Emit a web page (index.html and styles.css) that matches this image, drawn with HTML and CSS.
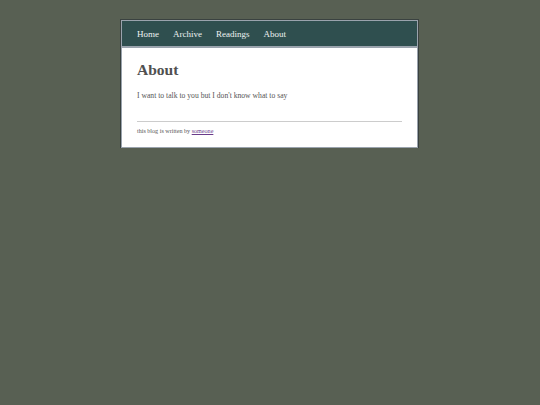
FILE: index.html
```html
<!DOCTYPE html>
<html>
<head>
<meta charset="utf-8">
<link rel="stylesheet" href="styles.css">
</head>
<body>
<div class="page">
  <nav class="nav">
    <a href="#">Home</a>
    <a href="#">Archive</a>
    <a href="#">Readings</a>
    <a href="#">About</a>
  </nav>
  <main class="content">
    <h1 class="title">About</h1>
    <p class="text">I want to talk to you but I don't know what to say</p>
    <hr class="rule">
    <footer class="foot">this blog is written by <a href="#">someone</a></footer>
  </main>
</div>
</body>
</html>
```
FILE: styles.css
```css
html, body { margin: 0; padding: 0; }
body {
  background: #586053;
  font-family: "Liberation Serif", "Times New Roman", serif;
  color: #555;
}
.page {
  width: 295px;
  margin: 20px 0 0 121px;
  border: 1px solid #9aa3ad;
  outline: 1px solid #3a4240;
  background: #fff;
}
.nav {
  background: #2f4f4f;
  display: flex;
  gap: 14px;
  padding: 8px 15px 6px;
  border-bottom: 2px solid #9aa3ad;
}
.nav a {
  color: #eef2f2;
  text-decoration: none;
  font-size: 9px;
  line-height: 11px;
}
.content {
  padding: 12px 15px 12px;
}
.title {
  margin: 0;
  font-size: 15.5px;
  line-height: 20px;
  color: #505050;
}
.text {
  margin: 11px 0 0;
  font-size: 7.65px;
  line-height: 10px;
  color: #555;
}
.rule {
  margin: 20px 0 0;
  border: 0;
  border-top: 1px solid #ccc;
  height: 0;
}
.foot {
  margin-top: 5px;
  font-size: 6.1px;
  line-height: 8px;
  color: #555;
}
.foot a { color: #6a3c8a; }
```
